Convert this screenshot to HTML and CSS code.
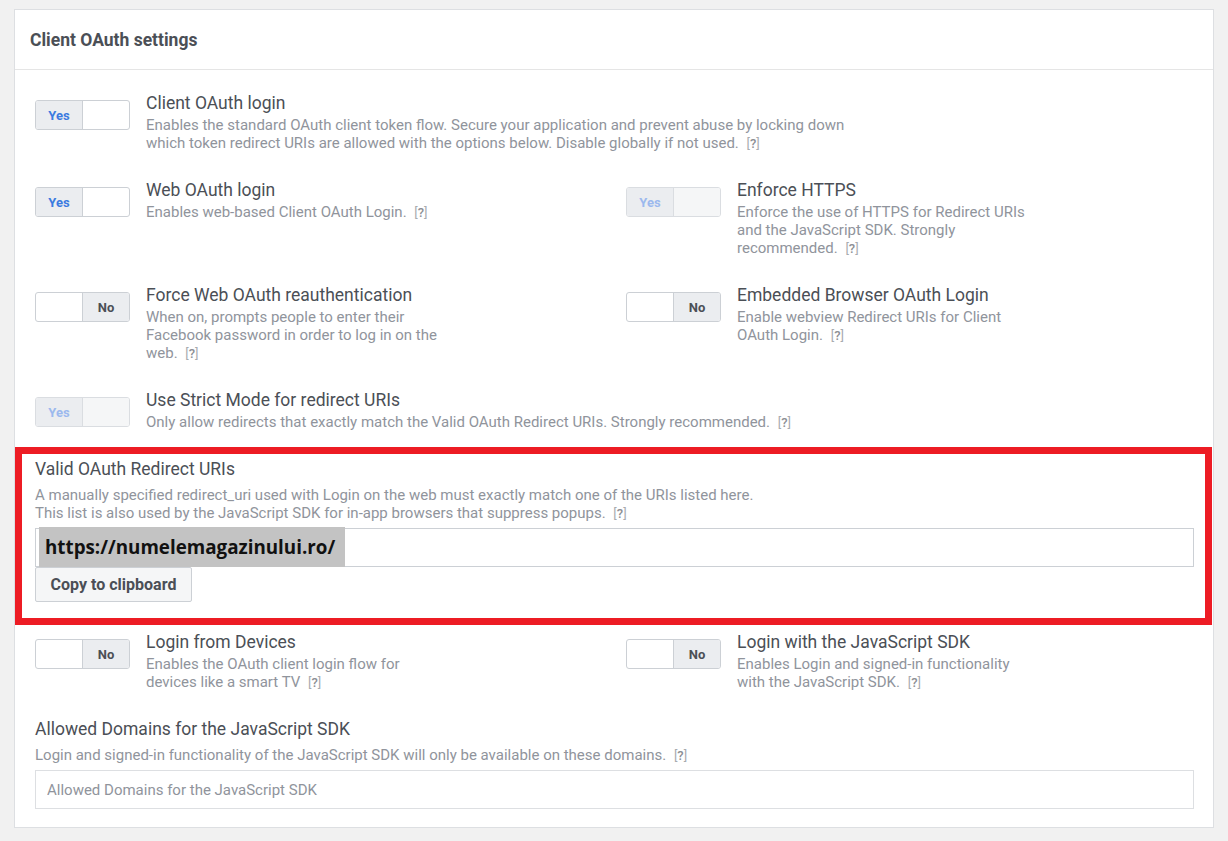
FILE: index.html
```html
<!DOCTYPE html>
<html lang="en">
<head>
    <meta charset="UTF-8">
    <title>Client OAuth settings</title>
    <link rel="stylesheet" href="styles.css">
</head>
<body>

<div class="card">
    <div class="card-header">Client OAuth settings</div>
    <div class="card-body">

        <div class="setting">
            <div class="toggle on"><span class="seg active">Yes</span><span class="seg"></span></div>
            <div class="setting-text">
                <div class="title">Client OAuth login</div>
                <div class="desc wide">Enables the standard OAuth client token flow. Secure your application and prevent abuse by locking down which token redirect URIs are allowed with the options below. Disable globally if not used. <span class="help">[<b>?</b>]</span></div>
            </div>
        </div>

        <div class="cols">
            <div class="setting">
                <div class="toggle on"><span class="seg active">Yes</span><span class="seg"></span></div>
                <div class="setting-text">
                    <div class="title">Web OAuth login</div>
                    <div class="desc">Enables web-based Client OAuth Login. <span class="help">[<b>?</b>]</span></div>
                </div>
            </div>
            <div class="setting">
                <div class="toggle on disabled"><span class="seg active">Yes</span><span class="seg"></span></div>
                <div class="setting-text">
                    <div class="title">Enforce HTTPS</div>
                    <div class="desc">Enforce the use of HTTPS for Redirect URIs and the JavaScript SDK. Strongly recommended. <span class="help">[<b>?</b>]</span></div>
                </div>
            </div>

            <div class="setting">
                <div class="toggle off"><span class="seg"></span><span class="seg active">No</span></div>
                <div class="setting-text">
                    <div class="title">Force Web OAuth reauthentication</div>
                    <div class="desc">When on, prompts people to enter their Facebook password in order to log in on the web. <span class="help">[<b>?</b>]</span></div>
                </div>
            </div>
            <div class="setting">
                <div class="toggle off"><span class="seg"></span><span class="seg active">No</span></div>
                <div class="setting-text">
                    <div class="title">Embedded Browser OAuth Login</div>
                    <div class="desc">Enable webview Redirect URIs for Client OAuth Login. <span class="help">[<b>?</b>]</span></div>
                </div>
            </div>
        </div>

        <div class="setting">
            <div class="toggle on disabled"><span class="seg active">Yes</span><span class="seg"></span></div>
            <div class="setting-text">
                <div class="title">Use Strict Mode for redirect URIs</div>
                <div class="desc wide">Only allow redirects that exactly match the Valid OAuth Redirect URIs. Strongly recommended. <span class="help">[<b>?</b>]</span></div>
            </div>
        </div>

        <div class="marked">
            <div class="field">
                <div class="title">Valid OAuth Redirect URIs</div>
                <div class="field-desc">A manually specified redirect_uri used with Login on the web must exactly match one of the URIs listed here.<br>This list is also used by the JavaScript SDK for in-app browsers that suppress popups. <span class="help">[<b>?</b>]</span></div>
                <div class="text-input url-input"><span class="url-highlight">https://numelemagazinului.ro/</span></div>
                <button class="btn">Copy to clipboard</button>
            </div>
        </div>

        <div class="cols">
            <div class="setting">
                <div class="toggle off"><span class="seg"></span><span class="seg active">No</span></div>
                <div class="setting-text">
                    <div class="title">Login from Devices</div>
                    <div class="desc">Enables the OAuth client login flow for devices like a smart TV <span class="help">[<b>?</b>]</span></div>
                </div>
            </div>
            <div class="setting">
                <div class="toggle off"><span class="seg"></span><span class="seg active">No</span></div>
                <div class="setting-text">
                    <div class="title">Login with the JavaScript SDK</div>
                    <div class="desc">Enables Login and signed-in functionality with the JavaScript SDK. <span class="help">[<b>?</b>]</span></div>
                </div>
            </div>
        </div>

        <div class="field">
            <div class="title">Allowed Domains for the JavaScript SDK</div>
            <div class="field-desc">Login and signed-in functionality of the JavaScript SDK will only be available on these domains. <span class="help">[<b>?</b>]</span></div>
            <input class="text-input" type="text" placeholder="Allowed Domains for the JavaScript SDK">
        </div>

    </div>
</div>

</body>
</html>
```

FILE: styles.css
```css
body {
    background-color: #f1f1f1;
    font-family: Roboto, "Liberation Sans", Arial, sans-serif;
    margin: 9px 14px;
    color: #4b4f56;
}
.card {
    background-color: #fff;
    border: 1px solid #dddfe2;
}
.card-header {
    height: 59px;
    padding: 0 15px;
    display: flex;
    align-items: center;
    border-bottom: 1px solid #e5e5e5;
    font-size: 17.5px;
    font-weight: bold;
    color: #4b4f56;
}
.card-body {
    padding: 23px 19px 18px 20px;
}
.setting {
    display: flex;
    gap: 16px;
    margin-bottom: 28px;
}
.cols {
    display: grid;
    grid-template-columns: 591px 1fr;
}
.toggle {
    display: flex;
    flex: none;
    width: 95px;
    height: 30px;
    margin-top: 7px;
    box-sizing: border-box;
    border: 1px solid #ccd0d5;
    border-radius: 3px;
    overflow: hidden;
    background-color: #fff;
}
.seg {
    flex: 1;
    display: flex;
    align-items: center;
    justify-content: center;
    font-size: 13px;
    font-weight: bold;
}
.seg.active {
    background-color: #ebedf0;
}
.on .seg.active {
    color: #3b7be0;
    border-right: 1px solid #ccd0d5;
}
.off .seg.active {
    color: #4b4f56;
    border-left: 1px solid #ccd0d5;
}
.toggle.disabled {
    border-color: #dadde1;
}
.disabled .seg {
    background-color: #f5f6f7;
}
.disabled .seg.active {
    color: #9cb9ee;
    background-color: #ebedf0;
    border-right-color: #dadde1;
}
.title {
    font-size: 17.5px;
    line-height: 20px;
    color: #4b4f56;
}
.desc {
    margin-top: 3px;
    font-size: 15px;
    line-height: 18px;
    color: #90949c;
    max-width: 298px;
}
.desc.wide {
    max-width: 720px;
}
.help {
    font-size: 13px;
    line-height: 1;
    color: #a8abaf;
    margin-left: 4px;
}
.help b {
    font-weight: 500;
    color: #8d9095;
}
.marked {
    margin: -12px -18px 7px -20px;
    border: 7px solid #ed1c24;
    padding: 5px 11px 16px 13px;
}
.field-desc {
    margin-top: 7px;
    font-size: 15px;
    line-height: 18px;
    color: #90949c;
}
.text-input {
    display: block;
    width: 100%;
    height: 39px;
    margin-top: 6px;
    box-sizing: border-box;
    border: 1px solid #dddfe2;
    font-family: inherit;
    font-size: 15px;
    padding: 0 11px;
    color: #4b4f56;
}
.text-input::placeholder {
    color: #90949c;
}
.url-input {
    padding: 0 0 0 3px;
    border-color: #ccd0d5;
}
.url-highlight {
    display: inline-block;
    height: 40px;
    margin-top: -2px;
    padding: 0 10px 0 6px;
    background-color: #c3c3c3;
    color: #111;
    font-family: "Open Sans", sans-serif;
    font-weight: bold;
    font-size: 18.8px;
    line-height: 40px;
    vertical-align: top;
}
.btn {
    display: block;
    margin-top: 0;
    height: 35px;
    width: 157px;
    background-color: #f5f6f7;
    border: 1px solid #ccd0d5;
    border-radius: 2px;
    font-family: inherit;
    font-size: 16px;
    font-weight: bold;
    color: #4b4f56;
    cursor: pointer;
}
```
